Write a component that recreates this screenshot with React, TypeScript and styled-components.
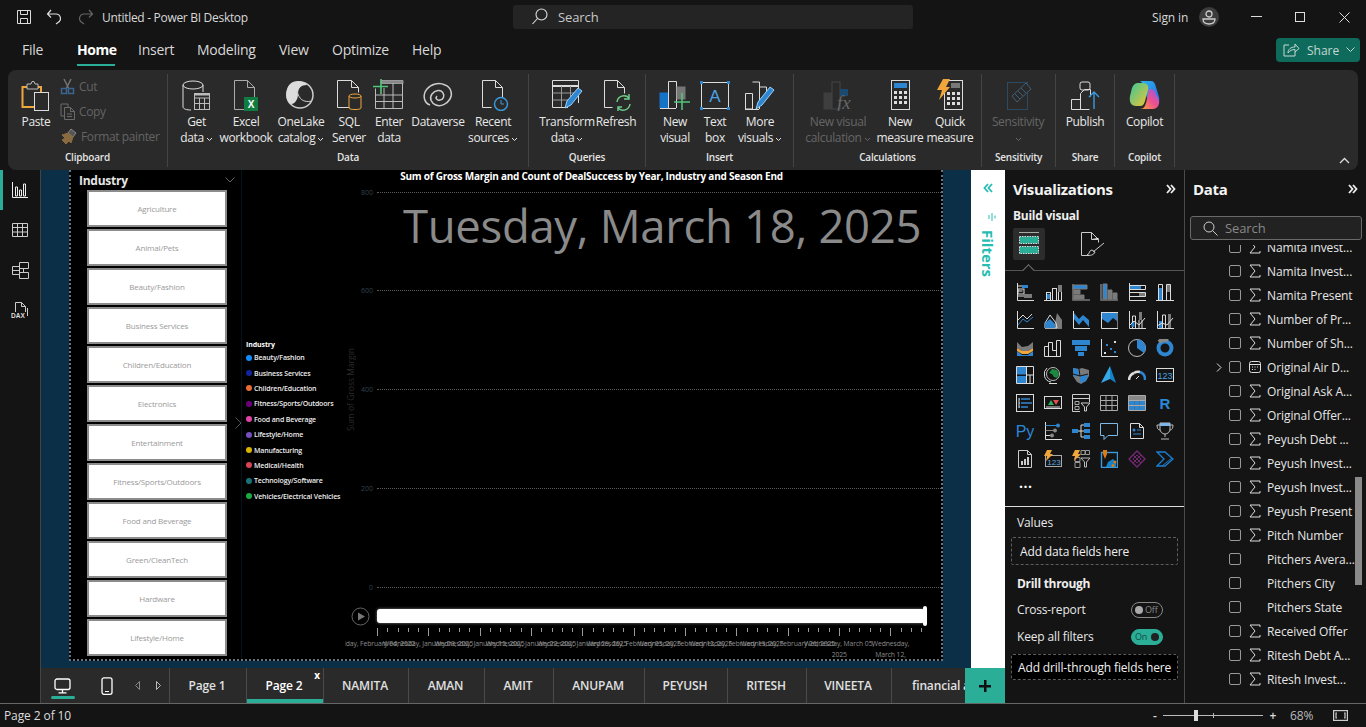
import React from "react";
import styled, { createGlobalStyle } from "styled-components";

const FONT = `"Open Sans", "Noto Sans", "Liberation Sans", sans-serif`;
const TEAL = "#2bae97";
const FILTER_TEAL = "#27bdb2";
const BLUE = "#2f86d0";
const GRAY = "#7a7a7a";
const LINE = "#dcdcdc";
const ORANGE = "#f0a63a";

const Global = createGlobalStyle`
  html, body { margin: 0; padding: 0; background: #141414; overflow: hidden; }
  #root { width: 1366px; height: 727px; }
  * { box-sizing: border-box; }
`;

const Shell = styled.div`
  width: 1366px; height: 727px; display: flex; flex-direction: column;
  background: #141414; color: #e8e8e8; font-family: ${FONT}; overflow: hidden;
`;

/* ---------- title bar ---------- */
const TitleBar = styled.div`
  height: 34px; display: flex; align-items: center; padding-left: 16px; position: relative;
`;
const QuickIcons = styled.div`display: flex; align-items: center; gap: 14px; width: 86px;`;
const AppTitle = styled.div`font-size: 12px; letter-spacing: -0.3px; color: #d8d8d8; width: 411px;`;
const SearchBar = styled.div`
  width: 400px; height: 24px; background: #242424; border-radius: 3px; display: flex; align-items: center;
  padding-left: 18px; gap: 9px; font-size: 13px; color: #c8c8c8; letter-spacing: -0.1px;
`;
const TitleRight = styled.div`display: flex; align-items: center; margin-left: auto;`;
const SignIn = styled.div`font-size: 12px; color: #d8d8d8; width: 47px; letter-spacing: -0.1px;`;
const Avatar = styled.div`
  width: 20px; height: 20px; border-radius: 50%; background: #3c3c3c; display: flex; align-items: center; justify-content: center;
  margin-right: 15px;
`;
const WinButton = styled.div`width: 44px; display: flex; justify-content: center;`;

/* ---------- menu ---------- */
const MenuBar = styled.div`height: 36px; display: flex; align-items: center; position: relative; padding-bottom: 4px;`;
const MenuList = styled.div`display: flex; flex: 1; padding-left: 22px; height: 32px;`;
const MenuItem = styled.div<{ $w: number; $active?: boolean }>`
  width: ${(p) => p.$w}px; font-size: 14px; line-height: 32px; letter-spacing: ${(p) => (p.$active ? "-0.45px" : "-0.25px")}; position: relative; white-space: nowrap;
  color: ${(p) => (p.$active ? "#fff" : "#d8d8d8")}; font-weight: ${(p) => (p.$active ? 700 : 400)};
  &::after { content: ""; display: ${(p) => (p.$active ? "block" : "none")}; position: absolute; left: 0; width: 38px; bottom: 0; height: 2px; background: ${TEAL}; }
`;
const ShareButton = styled.div`
  width: 84px; height: 24px; background: #0e6b5c; border-radius: 4px; margin-right: 6px; display: flex; align-items: center;
  padding-left: 7px; gap: 7px; font-size: 12px; color: #c4d8d3;
`;

/* ---------- ribbon ---------- */
const Ribbon = styled.div`
  height: 100px; margin: 0 8px; background: #2a2a2a; border-radius: 8px; display: flex; padding: 4px 0 3px; position: relative; flex: none;
`;
const Group = styled.div<{ $w: number; $pl?: number }>`
  width: ${(p) => p.$w}px; border-right: 1px solid #444; display: flex; flex-direction: column; flex: none;
  padding-left: ${(p) => p.$pl ?? 0}px;
`;
const GroupBody = styled.div`height: 75px; flex: none; display: flex;`;
const GroupLabel = styled.div<{ $ml?: number }>`
  height: 18px; margin-left: ${(p) => -(p.$ml ?? 0)}px; font-size: 10px; line-height: 16px; text-align: center; color: #e4e4e4; font-weight: 600; letter-spacing: -0.2px;
`;
const BigButton = styled.div<{ $w: number; $dim?: boolean }>`
  width: ${(p) => p.$w}px; flex: none; display: flex; flex-direction: column; align-items: center; padding-top: 5px;
  color: ${(p) => (p.$dim ? "#666" : "#e8e8e8")};
`;
const BigIcon = styled.div`height: 33px; width: 32px; display: flex; justify-content: center; flex: none; margin-bottom: 2px;`;
const BigText = styled.div`
  font-size: 12px; line-height: 16px; text-align: center; white-space: nowrap; letter-spacing: -0.35px;
`;
const SmallStack = styled.div`display: flex; flex-direction: column; margin-left: -4px;`;
const SmallButton = styled.div`
  height: 26px; display: flex; align-items: center; gap: 3px; font-size: 12px; color: #646464; white-space: nowrap; letter-spacing: -0.38px;
`;
const Collapse = styled.div`position: absolute; right: 8px; bottom: 6px; line-height: 0;`;

/* ---------- middle ---------- */
const Middle = styled.div`flex: 1; display: flex; min-height: 0; border-bottom: 1px solid #666;`;
const Rail = styled.div`
  width: 41px; flex: none; border-right: 1px solid #444; display: flex; flex-direction: column; position: relative;
`;
const RailItem = styled.div<{ $active?: boolean }>`
  height: 40px; display: flex; align-items: center; justify-content: center; border-left: 3px solid ${(p) => (p.$active ? TEAL : "transparent")};
  padding-right: 3px;
`;
const Center = styled.div`width: 964px; flex: none; display: flex; flex-direction: column;`;
const CanvasRow = styled.div`flex: 1; display: flex; min-height: 0;`;
const Canvas = styled.div`flex: 1; background: #0a2f47; padding: 0 28px 7px; min-width: 0;`;
const Page = styled.div`
  height: 100%; background: #000; display: flex; border: 2px dotted #66757f; border-top: none; position: relative;
`;

/* slicer */
const Slicer = styled.div`width: 171px; flex: none; padding-left: 8px; border-right: 1px solid #06121c; position: relative;`;
const SlicerHead = styled.div`
  height: 20px; display: flex; align-items: center; justify-content: space-between; padding: 0 6px 0 0; font-size: 12px; font-weight: 700; color: #e6e6e6; letter-spacing: -0.25px;
`;
const SlicerList = styled.div`margin-left: 8px; display: flex; flex-direction: column; gap: 2px; width: 140px;`;
const SlicerBtn = styled.div`
  height: 37px; background: #fff; border: 2px solid #8c8c8c; color: #9a9a9a; font-size: 8px; display: flex; align-items: center; justify-content: center; white-space: nowrap; letter-spacing: -0.17px;
`;
const SlicerArrow = styled.div`position: absolute; right: -1px; top: 247px; line-height: 0;`;

/* chart */
const ChartVisual = styled.div`flex: 1; display: flex; flex-direction: column; position: relative; min-width: 0;`;
const ChartTitle = styled.div`height: 12px; font-size: 10px; line-height: 12px; font-weight: 700; color: #fff; text-align: center; letter-spacing: -0.24px; white-space: nowrap;`;
const BigDate = styled.div`
  position: absolute; left: 161px; top: 25px; font-size: 45.5px; line-height: 60px; color: #8a8a8a; white-space: nowrap; letter-spacing: -0.33px;
`;
const ChartBody = styled.div`flex: 1; display: flex; min-height: 0;`;
const Legend = styled.div`width: 103px; flex: none; padding: 158px 0 0 4px;`;
const LegendTitle = styled.div`font-size: 7px; font-weight: 700; color: #fff; line-height: 10px; letter-spacing: -0.1px;`;
const LegendItem = styled.div`display: flex; align-items: center; gap: 2px; height: 15.4px; font-size: 7px; font-weight: 600; color: #eee; white-space: nowrap; letter-spacing: -0.15px;`;
const LegendDot = styled.span<{ $c: string }>`width: 6px; height: 6px; border-radius: 50%; background: ${(p) => p.$c}; flex: none;`;
const AxisTitle = styled.div`
  width: 13px; flex: none; writing-mode: vertical-rl; transform: rotate(180deg); text-align: center; font-size: 8.5px; color: #2c2c2c;
`;
const Plot = styled.div`flex: 1; display: flex; flex-direction: column; justify-content: space-between; padding: 4px 0 4px; min-width: 0;`;
const GridRow = styled.div`height: 12px; display: flex; align-items: center;`;
const GridLabel = styled.div`width: 15px; flex: none; text-align: right; font-size: 7px; color: #33414d; margin-right: 4px;`;
const GridDots = styled.div`flex: 1; border-top: 1px dotted #5c5c5c;`;

const PlayAxis = styled.div`height: 62px; flex: none; padding-top: 9px;`;
const PlayRow = styled.div`display: flex; align-items: center; height: 20px; padding-left: 109px;`;
const PlayBtn = styled.div`width: 26px; flex: none; line-height: 0;`;
const Track = styled.div`
  width: 548px; height: 14px; background: #fff; border-radius: 3px; position: relative; box-shadow: 0 0 3px #888; flex: none;
`;
const Thumb = styled.div`position: absolute; right: -2px; top: -3px; width: 4px; height: 20px; border-radius: 2px; background: #fff;`;
const TickRow = styled.div`display: flex; margin: 2px 0 0 135px; width: 560px; align-items: flex-start;`;
const Tick = styled.div<{ $major: boolean }>`width: 10.28px; flex: none; height: 8px;
  &::before { content: ""; display: block; width: 1px; height: ${(p) => (p.$major ? 8 : 4)}px; background: #999; }
`;
const LabelClip = styled.div`margin: 2px 0 0 103px; overflow: hidden; height: 20px; display: flex; padding-left: 6px;`;
const TimeLabel = styled.div`
  width: 51.4px; flex: none; display: flex; justify-content: center; font-size: 6.8px; line-height: 11px; color: #8c8c8c; letter-spacing: -0.1px; text-align: center;
  white-space: nowrap;
`;

/* filters */
const FiltersPane = styled.div`
  width: 34px; flex: none; background: #fff; display: flex; flex-direction: column; align-items: center; color: ${FILTER_TEAL}; padding-top: 13px;
`;
const FiltersLabel = styled.div`writing-mode: vertical-rl; font-size: 15px; font-weight: 700; margin-top: 8px; letter-spacing: 0;`;

/* page tabs */
const TabStrip = styled.div`height: 35px; flex: none; background: #2a2a2a; display: flex; overflow: hidden;`;
const TabTools = styled.div`width: 128px; flex: none; display: flex; align-items: center; padding-left: 10px;`;
const DeviceBtn = styled.div<{ $active?: boolean; $w: number; $ml?: number }>`
  width: ${(p) => p.$w}px; margin-left: ${(p) => p.$ml ?? 0}px; height: 35px; display: flex; align-items: center; justify-content: center; position: relative; flex: none;
  &::after { content: ""; display: ${(p) => (p.$active ? "block" : "none")}; position: absolute; left: 0; bottom: 4px; height: 3px; width: 24px; border-radius: 2px; background: ${TEAL}; }
`;
const Tab = styled.div<{ $w: number; $active?: boolean; $left?: boolean }>`
  width: ${(p) => p.$w}px; flex: none; border-left: 1px solid #4a4a4a; font-size: 12px; font-weight: 600; line-height: 35px; color: ${(p) => (p.$active ? "#fff" : "#e0e0e0")};
  text-align: ${(p) => (p.$left ? "left" : "center")}; padding: ${(p) => (p.$left ? "0 0 0 20px" : "0 2px 0 0")};
  position: relative; white-space: nowrap; overflow: hidden; letter-spacing: -0.15px;
  ${(p) => (p.$active ? `&::after { content: ""; position: absolute; left: 0; right: 0; bottom: 0; height: 4px; background: ${TEAL}; }` : "")}
`;
const TabClose = styled.span`position: absolute; right: 3px; top: -10px; font-size: 10px; font-weight: 700; color: #fff;`;
const AddTab = styled.div`width: 40px; flex: none; background: ${TEAL}; color: #111; display: flex; align-items: center; justify-content: center;`;

/* viz pane */
const VizPane = styled.div`width: 180px; flex: none; border-right: 1px solid #4a4a4a; display: flex; flex-direction: column;`;
const PaneHead = styled.div`
  height: 38px; flex: none; display: flex; align-items: center; justify-content: space-between; padding: 0 8px 1px 8px; font-size: 15px; font-weight: 700; color: #f4f4f4; letter-spacing: -0.3px;
`;
const BuildLabel = styled.div`font-size: 12px; font-weight: 700; color: #eee; padding-left: 8px; line-height: 16px; letter-spacing: -0.25px;`;
const BuildTabs = styled.div`height: 47px; display: flex; padding: 4px 0 0 8px; flex: none; border-bottom: 1px solid #555; position: relative;`;
const BuildTab = styled.div<{ $active?: boolean; $w: number }>`
  width: 32px; height: 32px; margin-right: ${(p) => p.$w}px; display: flex; align-items: center; justify-content: center; border-radius: 2px; background: ${(p) => (p.$active ? "#2c2c2c" : "transparent")};
`;
const Notch = styled.div`
  position: absolute; left: 19px; bottom: -5px; width: 9px; height: 9px; background: #141414; border-left: 1px solid #777; border-top: 1px solid #777; transform: rotate(45deg);
`;
const VizGrid = styled.div`
  display: grid; grid-template-columns: repeat(6, 18px); column-gap: 10px; row-gap: 9.8px; padding: 12px 0 0 11px; flex: none; height: 236px; border-bottom: 1px solid #ddd; align-content: start;
`;
const VizCell = styled.div`width: 18px; height: 18px; line-height: 0;`;
const MoreDots = styled.div`font-size: 14px; font-weight: 700; letter-spacing: 0.5px; line-height: 10px; margin-left: 3px; color: #fff;`;
const FieldLabel = styled.div`font-size: 12px; padding: 8px 0 0 12px; line-height: 16px; color: #e8e8e8; letter-spacing: -0.1px;`;
const DropZone = styled.div<{ $dark?: boolean; $h: number; $pl: number; $mt: number }>`
  margin: ${(p) => p.$mt}px 6px 0; height: ${(p) => p.$h}px; border: 1px dashed #5c5c5c; display: flex; align-items: center; padding-left: ${(p) => p.$pl}px; border-radius: 2px;
  font-size: 12px; color: #f0f0f0; white-space: nowrap; background: ${(p) => (p.$dark ? "#000" : "transparent")}; letter-spacing: -0.15px;
`;
const DrillTitle = styled.div`font-size: 12px; font-weight: 700; padding: 11px 0 4px 12px; line-height: 16px; color: #eee; letter-spacing: -0.3px;`;
const ToggleRow = styled.div`height: 27px; display: flex; align-items: center; justify-content: space-between; padding: 0 21px 0 12px; font-size: 12px; color: #e8e8e8; letter-spacing: -0.15px;`;
const ToggleBox = styled.div<{ $on?: boolean }>`
  width: 32px; height: 16px; border-radius: 8px; display: flex; align-items: center; padding: 0 3px; gap: 2px; font-size: 9px; flex: none;
  border: 1px solid ${(p) => (p.$on ? TEAL : "#888")}; background: ${(p) => (p.$on ? TEAL : "transparent")}; color: ${(p) => (p.$on ? "#0e4d42" : "#888")};
  justify-content: ${(p) => (p.$on ? "space-between" : "flex-start")};
`;
const ToggleKnob = styled.span<{ $on?: boolean }>`width: 8px; height: 8px; border-radius: 50%; background: ${(p) => (p.$on ? "#222" : "#aaa")}; flex: none;`;

/* data pane */
const DataPane = styled.div`flex: 1; display: flex; flex-direction: column; position: relative; min-width: 0;`;
const DataSearch = styled.div`
  height: 24px; margin: 8px 4px 0 5px; border: 1px solid #6a6a6a; border-radius: 3px; background: #222; display: flex; align-items: center; padding-left: 12px; gap: 7px; font-size: 13px; color: #888; flex: none; letter-spacing: -0.1px;
`;
const FieldList = styled.div`flex: 1; overflow: hidden; margin-top: 5px; min-height: 0;`;
const FieldInner = styled.div`margin-top: -10px;`;
const FieldRow = styled.div`height: 24px; display: flex; align-items: center; padding-left: 31px; font-size: 12px; color: #e6e6e6; white-space: nowrap; letter-spacing: -0.1px;`;
const Expander = styled.div`width: 13px; flex: none; line-height: 0;`;
const CheckBox = styled.div`width: 12px; height: 12px; border: 1px solid #999; border-radius: 2px; flex: none; margin-right: 8px;`;
const FieldIcon = styled.div`width: 18px; height: 14px; flex: none; line-height: 0; display: flex; justify-content: flex-start;`;
const ScrollThumb = styled.div`position: absolute; right: 4px; top: 307px; width: 7px; height: 108px; background: #8a8a8a;`;

/* status */
const StatusBar = styled.div`height: 23px; flex: none; display: flex; align-items: center; padding: 0 0 0 4px; font-size: 12px; color: #ddd; letter-spacing: -0.1px;`;
const ZoomTools = styled.div`margin-left: auto; display: flex; align-items: center; font-size: 12px; color: #ccc;`;
const ZoomSign = styled.span`width: 8px; text-align: center; color: #ddd; font-weight: 600;`;
const ZoomTrack = styled.div`width: 100px; height: 1px; background: #bbb; margin: 0 6px 0 4px; position: relative;`;
const ZoomThumb = styled.div`position: absolute; left: 31px; top: -5px; width: 4px; height: 11px; background: #ddd;`;
const ZoomMid = styled.div`position: absolute; left: 50px; top: -2px; width: 1px; height: 5px; background: #bbb;`;
const ZoomPct = styled.div`width: 30px; margin: 0 13px 0 13px; color: #bbb;`;
const FitIcon = styled.div`width: 33px; line-height: 0;`;

/* ---------- icons ---------- */
const S: React.FC<{ w?: number; h?: number; vb?: string; children: React.ReactNode }> = ({ w = 32, h = 32, vb, children }) => (
  <svg width={w} height={h} viewBox={vb ?? `0 0 ${w} ${h}`} fill="none" stroke={LINE} strokeWidth={1}>{children}</svg>
);

const DocPath = "M5.5 1.5h13l7 7v22h-20z M18.5 1.5v7h7";
const PlusGreen = "#52c77b";

const IPaste = () => (
  <S><path d="M7 8H2.5v20H15" stroke={ORANGE} strokeWidth={2} /><path d="M17 8h4v5" stroke={ORANGE} strokeWidth={2} />
    <path d="M7 10V5h4l1-2.5h2L15 5h3v5z" fill="#2a2a2a" stroke="#bbb" />
    <rect x="14.5" y="13.5" width="14" height="18" fill="#2a2a2a" /></S>
);
const ICut = () => (<S w={16} h={17}><path d="M4 1l5 10M11 1L6 11" stroke="#777" strokeWidth={1.4} /><rect x="1.5" y="10.5" width="5" height="5" stroke="#3a6590" strokeWidth={1.5} /><rect x="8.5" y="10.5" width="5" height="5" stroke="#3a6590" strokeWidth={1.5} /></S>);
const ICopy = () => (<S w={16} h={17}><path d="M4 13H1V1h7v3M4.500 4.500h6l4 4v8h-10z M10.500 4.500v4h4M7 11h5M7 13.500h5" stroke="#6a6a6a" /></S>);
const IBrush = () => (<S w={18} h={17}><path d="M11 1l5 4-3 4-5-4z" stroke="#888" fill="#555" /><path d="M8 5L2 7l3 3-3 2 4 4 3-3 2 2 2-6z" fill="#8a6a3f" stroke="#8a6a3f" /></S>);
const IGetData = () => (
  <S w={32} h={32}><ellipse cx="12" cy="6" rx="10" ry="4" /><path d="M2 6v22c0 2 4 3 8 3M22 6v7" />
    <rect x="13.500" y="14.500" width="15" height="16" fill="#2a2a2a" stroke="#bbb" /><path d="M13.500 19h15M13.500 24.500h15M18.500 19v11M23.500 19v11" stroke="#bbb" /><path d="M13.500 15.500h15" stroke="#bbb" strokeWidth={2} /></S>
);
const IExcel = () => (
  <S><path d={DocPath} stroke="#aaa" transform="translate(-1 0)" /><rect x="14" y="18" width="14" height="14" fill="#107c41" stroke="none" /><text x="21" y="29" fontFamily="Liberation Sans, sans-serif" fontSize="10" fontWeight="700" fill="#fff" stroke="none" textAnchor="middle">X</text></S>
);
const IOneLake = () => (
  <S><circle cx="15" cy="16" r="13" stroke="#ccc" strokeWidth={1.5} /><path d="M5 5c4-4 13-4 17 1-6 0-9 3-9 9 0 7-5 12-9 9-4-4-4-14 1-19z" fill="#ddd" stroke="none" /><path d="M12 12c2 8 6 12 15 10" stroke="#ccc" /></S>
);
const ISql = () => (
  <S><path d="M4.500 1.500h14l7 7v5M4.500 1.500v27h12M18.500 1.500v7h7" />
    <ellipse cx="22" cy="17" rx="6" ry="2" stroke={ORANGE} /><path d="M16 17v12c0 2 12 2 12 0V17" stroke={ORANGE} fill="none" /></S>
);
const IEnter = () => (
  <S w={32} h={32}><path d="M8 1.500h22v3H8z" fill="#888" stroke="#999" /><path d="M2.500 9.500v20h27V4" stroke="#bbb" /><path d="M2.500 16h27M2.500 22.500h27M11 9v20M20 4v25" stroke="#bbb" />
    <path d="M8 0v15M0 7.500h15" stroke={PlusGreen} strokeWidth={1.6} /></S>
);
const IDataverse = () => (
  <S w={32} h={32}><g stroke="#ccc" strokeWidth={1.5}><path d="M8 26C2 24 0 16 5 10 9 5 17 3 23 6c6 2 8 9 5 14-3 5-9 8-14 6-5-2-7-7-4-11 3-4 9-5 11-1 2 3 0 7-3 7-3 1-5-2-3-4" /></g></S>
);
const IRecent = () => (
  <S><path d="M5.500 1.500h13l7 7v10M5.500 1.500v27h9M18.500 1.500v7h7" /><circle cx="24" cy="25" r="6.500" stroke="#3b9ade" fill="#2a2a2a" strokeWidth={1.4} /><path d="M24 21v4h3" stroke="#3b9ade" /></S>
);
const ITransform = () => (
  <S><path d="M1.500 1.500h26V24M1.500 1.500v27H17" /><path d="M1.500 7h26" strokeWidth={2} /><path d="M1.500 14h22M1.500 21h17M10.500 7v21M19.500 7v13" stroke="#999" />
    <path d="M14 29l2-7L27 9l4 3L20 26z" fill="#2f86d0" stroke="#9ad0f5" /></S>
);
const IRefresh = () => (
  <S><path d="M4.500 1.500h13l7 7v6M4.500 1.500v27h8M17.500 1.500v7h7" /><path d="M17 23a7 7 0 0 1 12-4M30 25a7 7 0 0 1-12 4" stroke="#6fd08c" strokeWidth={1.4} /><path d="M29 15v5h-5M18 33v-5h4" stroke="#6fd08c" strokeWidth={1.4} /></S>
);
const INewVisual = () => (
  <S><rect x="1" y="14" width="8" height="15" fill="#1473c6" stroke="#1473c6" /><path d="M9.500 29V2.500h8V29" /><rect x="18" y="8" width="8" height="12" fill="#777" stroke="#777" /><path d="M1 29.500h16" />
    <path d="M23 14v17M15 23h16" stroke={PlusGreen} strokeWidth={1.5} /></S>
);
const ITextBox = () => (
  <S><rect x="2.500" y="3.500" width="27" height="26" /><g fill={BLUE} stroke="none"><rect x="1" y="2" width="3" height="3" /><rect x="28" y="2" width="3" height="3" /><rect x="1" y="28" width="3" height="3" /><rect x="28" y="28" width="3" height="3" /></g><text x="16" y="23" fontFamily="Liberation Sans, sans-serif" fontSize="17" fill="#4aa3e8" stroke="none" textAnchor="middle">A</text></S>
);
const IMoreVisuals = () => (
  <S><path d="M1.500 14.500h7V30H1.500zM8.500 3h7v27M15.500 8h7v8" /><path d="M1 30.500h14" /><path d="M12 30l2-7L26 8l4 3L18 26z" fill="#2f86d0" stroke="#9ad0f5" /></S>
);
const IVisCalc = () => (
  <S><rect x="2" y="14" width="8" height="16" fill="#3e3e3e" stroke="#3e3e3e" /><rect x="10" y="3" width="8" height="27" stroke="#444" fill="#2a2a2a" /><rect x="18" y="10" width="8" height="7" fill="#1a4a70" stroke="none" /><text x="15" y="30" fontFamily="Liberation Serif, serif" fontStyle="italic" fontSize="19" fill="#666" stroke="none">fx</text></S>
);
const ICalc = () => (
  <S><rect x="7.500" y="1.500" width="18" height="29" /><rect x="10" y="4" width="13" height="5" fill="#2f86d0" stroke="none" />
    <g fill="#ddd" stroke="none">{[12, 17, 22].flatMap((y) => [10, 15, 20].map((x) => <rect key={`${x}-${y}`} x={x} y={y} width="3" height="3" />))}</g></S>
);
const IQuick = () => (
  <S><rect x="10.500" y="1.500" width="18" height="29" /><rect x="17" y="4" width="9" height="5" fill="#777" stroke="none" />
    <g fill="#ddd" stroke="none">{[13, 18, 23].flatMap((y) => [13, 18, 23].map((x) => <rect key={`${x}-${y}`} x={x} y={y} width="3" height="3" />))}</g>
    <path d="M9 0h7l-4 8h4L5 21l3-10H3z" fill={ORANGE} stroke="none" /></S>
);
const ISensitivity = () => (
  <S><rect x="5.500" y="3.500" width="20" height="27" stroke="#2d4a60" /><path d="M10 17l14-13 5 6-14 13z" fill="#2a2a2a" stroke="#3f5f78" /><path d="M13 15l5 5M16 12l5 5M19 9l5 5" stroke="#3f5f78" /></S>
);
const IPublish = () => (
  <S><path d="M2.500 20.500h9v10h-9zM11.500 30.500V14.500l4-4h6v7" /><path d="M11.500 30.500h9" /><rect x="11" y="3" width="10" height="8" rx="2" /><path d="M25 30V13M20 18l5-5 5 5" stroke="#3b9ade" strokeWidth={1.4} /></S>
);
const ICopilot = () => (
  <svg width="32" height="32" viewBox="0 0 32 32">
    <defs>
      <linearGradient id="cpA" x1="0" y1="0" x2="1" y2="1"><stop offset="0" stopColor="#2fb4f0" /><stop offset="1" stopColor="#1f6de0" /></linearGradient>
      <linearGradient id="cpB" x1="0" y1="1" x2="1" y2="0"><stop offset="0" stopColor="#f5a63c" /><stop offset=".5" stopColor="#ef4f8e" /><stop offset="1" stopColor="#8a5cf0" /></linearGradient>
      <linearGradient id="cpC" x1="0" y1="0" x2="1" y2="1"><stop offset="0" stopColor="#37c89a" /><stop offset="1" stopColor="#f3c332" /></linearGradient>
    </defs>
    <path d="M11 2h11c2 0 3 1 4 3l4 13c1 4-1 8-5 8h-5L15 8c-1-3-2-5-4-6z" fill="url(#cpA)" />
    <path d="M9 4C6 4 4 6 3 9L1 17c-1 6 1 10 6 10h4c3 0 4-2 5-5l3-11c1-4-1-7-5-7z" fill="url(#cpC)" />
    <path d="M21 10c3 0 5 1 6 5l3 6c1 5-2 9-6 9H11c4 0 5-3 6-6l2-8c.5-3 1-6 2-6z" fill="url(#cpB)" />
  </svg>
);

const Ax = <path d="M1.500 0v17.500H18" />;

const vizIcons: React.ReactNode[] = [
  <S w={18} h={18}>{Ax}<path d="M1.500 3h5M1.500 8h5M1.500 13h9" stroke={LINE} /><rect x="6" y="2" width="6" height="3" fill={BLUE} stroke="none" /><rect x="2" y="6" width="6" height="5" stroke={LINE} /><rect x="8" y="11" width="8" height="4" fill={GRAY} stroke="none" /></S>,
  <S w={18} h={18}><path d="M0 17.500h18" /><rect x="2.500" y="9.500" width="4" height="8" /><rect x="3" y="11" width="3" height="5" fill={BLUE} stroke="none" /><rect x="8.500" y="5.500" width="4" height="12" /><rect x="14" y="2" width="4" height="7" fill={GRAY} stroke="none" /><path d="M14.500 9v8.500M17.500 9v8.500" /></S>,
  <S w={18} h={18}><g stroke={GRAY} strokeWidth={1.5}><path d="M1 1v16h17" /></g><path d="M1 2h14v4H1z" fill={BLUE} stroke={GRAY} /><path d="M2 7h6v4H2zM2 12h10v4H2z" fill={GRAY} stroke={GRAY} /></S>,
  <S w={18} h={18}><g stroke={GRAY} strokeWidth={1.5}><path d="M1 1v16h17" /></g><path d="M3 1h4v15H3z" fill={BLUE} stroke={GRAY} /><path d="M8 7h4v9H8zM13 10h4v6h-4z" fill={GRAY} stroke={GRAY} /></S>,
  <S w={18} h={18}>{Ax}<path d="M1.500 2.500h16v4h-16zM1.500 9.500h16v4h-16z" /><rect x="2" y="3" width="11" height="3" fill={BLUE} stroke="none" /><rect x="11" y="10" width="6" height="3" fill={GRAY} stroke="none" /></S>,
  <S w={18} h={18}><path d="M0 17.500h18" /><path d="M2.500 1.500h4v16h-4zM10.500 1.500h4v16h-4z" /><rect x="3" y="5" width="3" height="12" fill={BLUE} stroke="none" /><rect x="11" y="2" width="3" height="7" fill={GRAY} stroke="none" /></S>,

  <S w={18} h={18}>{Ax}<path d="M2 9l5-5 4 4 5-5" /><path d="M2 14l5-6 4 3 6-5" stroke={BLUE} /></S>,
  <S w={18} h={18}><path d="M1 17h17" /><path d="M10 17l3-15 5 7v8z" fill={GRAY} stroke="none" /><path d="M1 12l5-8 6 8 1 5H1z" fill="none" stroke={LINE} /><path d="M1 17v-5l5-4 5 5v4z" fill={BLUE} stroke="none" /></S>,
  <S w={18} h={18}>{Ax}<path d="M2 2l5 6 4-4 6 5v7L11 9l-4 5-5-6z" fill={BLUE} stroke="none" /></S>,
  <S w={18} h={18}><path d="M1.500 1v16.500H18M1.500 1.500H18v16" /><path d="M2 2h15v8l-4-3-5 5-6-4z" fill={BLUE} stroke="none" /></S>,
  <S w={18} h={18}>{Ax}<path d="M4.500 17V5M7.500 17V5M4.500 5h3" /><rect x="11" y="1" width="3" height="8" fill={GRAY} stroke="none" /><path d="M11 9v8M14 9v8" /><rect x="3.500" y="11" width="3" height="5" fill={BLUE} stroke="none" /><path d="M1 15l5-5 5 4 6-7" /></S>,
  <S w={18} h={18}>{Ax}<path d="M6.500 17V4h3v13" /><rect x="3" y="10" width="3" height="7" fill={BLUE} stroke="none" /><rect x="12" y="3" width="3" height="14" fill={GRAY} stroke="none" /><path d="M1 15l5-3 5 2 6-7" /></S>,

  <S w={18} h={18}><path d="M1 3l5 5 6-1 5-4v6l-5 3-6 0-5-3z" fill={GRAY} stroke="none" /><path d="M1 9l5 3 6 0 5-3v3l-5 3-6 0-5-3z" fill={ORANGE} stroke="none" /><path d="M1 12l5 4h6l5-4v5H1z" fill={BLUE} stroke="none" /></S>,
  <S w={18} h={18}><path d="M.500 17.500V7.500h4v10M.500 17.500h16M4.500 17.500V3.500h4v8M8.500 11.500h4v6M12.500 17.500V1.500h4v16" /></S>,
  <S w={18} h={18}><rect x="0" y="1" width="18" height="5" fill={BLUE} stroke="none" /><rect x="3" y="7" width="12" height="5" fill={BLUE} stroke="none" /><rect x="6" y="13" width="6" height="4" fill={BLUE} stroke="none" /></S>,
  <S w={18} h={18}>{Ax}<g stroke="none"><rect x="4" y="13" width="2" height="2" fill="#ddd" /><rect x="6" y="5" width="2" height="2" fill={BLUE} /><rect x="10" y="9" width="2" height="2" fill={BLUE} /><rect x="14" y="12" width="2" height="2" fill={BLUE} /><rect x="14" y="2" width="2" height="2" fill="#ddd" /></g></S>,
  <S w={18} h={18}><circle cx="9" cy="9" r="8.500" stroke="#bbb" /><path d="M9 9l7 5A8.500 8.500 0 0 0 9 .5z" fill={BLUE} stroke="none" /></S>,
  <S w={18} h={18}><circle cx="9" cy="9" r="6.500" stroke={BLUE} strokeWidth={4} /><path d="M3 3A8 8 0 0 1 12 1.500" stroke="#888" strokeWidth={4} /></S>,

  <S w={18} h={18}><path d="M.500.500h17v17H.500zM10.500.500v17M10.500 9h7M14 9v8.500" /><rect x="1" y="1" width="9" height="7.500" fill={BLUE} stroke="none" /><rect x="1" y="10" width="9" height="7" fill={BLUE} stroke="none" /></S>,
  <S w={18} h={18}><circle cx="9" cy="8" r="6.500" stroke="#bbb" /><path d="M8 3l5 1 2 4-2 4-3-1-2-3-3-1z" fill="#1c8a3e" stroke="none" /><path d="M3 2a8 8 0 0 0 4 14M5 17.500h8" /></S>,
  <S w={18} h={18}><path d="M1 2l6 1 3-1 7 2v6l-3 5-5 3-4-2-4-6z" fill={GRAY} stroke="none" /><path d="M1 2l5 1 1 6-5 2zM8 10l8-1-2 6-6 2z" fill={BLUE} stroke="none" /><path d="M7 3l1 7 8-2M1 8l7 2" stroke="#141414" /></S>,
  <S w={18} h={18}><path d="M10 0l6 17-6-4z" fill="#1583c9" stroke="none" /><path d="M10 0L1 17l9-4z" fill="#35a8e8" stroke="none" /></S>,
  <S w={18} h={18}><path d="M1 14a8 8 0 0 1 5-7" stroke="#ddd" strokeWidth={2.500} /><path d="M6 7a8 8 0 0 1 6-1" stroke="#ddd" strokeWidth={2.500} /><path d="M12 6a8 8 0 0 1 5 8" stroke={BLUE} strokeWidth={2.500} /><path d="M8 13l3-3" stroke="#ddd" /></S>,
  <S w={18} h={18}><rect x=".5" y="2.500" width="17" height="13" /><text x="9" y="12.500" fontFamily="Liberation Sans, sans-serif" fontSize="9" fill="#4aa3e8" stroke="none" textAnchor="middle">123</text></S>,

  <S w={18} h={18}><rect x=".5" y=".5" width="17" height="17" /><path d="M3 5h1M5 5h9M3 9h1M5 9h11M3 13h1M5 13h7" stroke={BLUE} strokeWidth={1.4} /><path d="M3 4v10" /></S>,
  <S w={18} h={18}><rect x=".5" y="2.500" width="17" height="12" /><path d="M4 11l3-5 3 5z" fill="#2fae5f" stroke="none" /><path d="M9 6h6l-3 5z" fill="#e05050" stroke="none" /><path d="M2 13h14" /></S>,
  <S w={18} h={18}><path d="M17.500 8V.5H.500v17H8M.500 4.500h17" stroke="#ccc" /><path d="M3 7.500h4v3H3zM3 12.500h4v3H3z" stroke="#aaa" /><path d="M9 9h9l-3.500 4v4h-2v-4z" stroke="#ccc" fill="#141414" /></S>,
  <S w={18} h={18}><path d="M.500 1.500h17v15H.500zM.500 6.500h17M.500 11.500h17M6 1.500v15M12 1.500v15" stroke="#aaa" /></S>,
  <S w={18} h={18}><path d="M.500 1.500h17v15H.500zM.500 6.500h17M.500 11.500h17M6 1.500v15M12 1.500v15" stroke="#aaa" /><rect x="1" y="2" width="16" height="4" fill="#888" stroke="none" /><g fill={BLUE} stroke="none"><rect x="1" y="7" width="5" height="4" /><rect x="6.500" y="7" width="5" height="4" /><rect x="1" y="12" width="5" height="4" /><rect x="6.500" y="12" width="5" height="4" /><rect x="12" y="7" width="5" height="4" /><rect x="12" y="12" width="5" height="4" /></g></S>,
  <S w={18} h={18}><text x="9" y="15" fontFamily="Liberation Sans, sans-serif" fontSize="15" fontWeight="700" fill="#2b88d8" stroke="none" textAnchor="middle">R</text></S>,

  <S w={18} h={18}><text x="9" y="14.500" fontFamily="Liberation Sans, sans-serif" fontSize="16" fill="#2b88d8" stroke="none" textAnchor="middle">Py</text></S>,
  <S w={18} h={18}>{Ax}<path d="M1.500 3.500h11" stroke={BLUE} /><circle cx="14" cy="3.500" r="2" fill={BLUE} stroke="none" /><path d="M1.500 8.500h8" stroke="#888" /><circle cx="11" cy="8.500" r="2" fill="#888" stroke="none" /><path d="M1.500 13.500h5" /><circle cx="8" cy="13.500" r="2" fill="#888" stroke="none" /></S>,
  <S w={18} h={18}><rect x="0" y="7" width="6" height="4" fill={BLUE} stroke="none" /><g fill={BLUE} stroke="none"><rect x="12" y="1" width="6" height="4" /><rect x="12" y="7" width="6" height="4" /><rect x="12" y="13" width="6" height="4" /></g><path d="M6 9h6M9 3h3M9 15h3M9 3v12" /></S>,
  <S w={18} h={18}><path d="M.500 1.500h17v12H8l-4 4v-4H.500z" stroke="#7db8e8" /></S>,
  <S w={18} h={18}><path d="M2.500 1.500h9l4 4v11h-13z M11.500 1.500v4h4" /><circle cx="6" cy="8" r="1.500" fill={BLUE} stroke="none" /><path d="M5 12h8M9 8h4" stroke={BLUE} /></S>,
  <S w={18} h={18}><path d="M4 1h10v6a5 5 0 0 1-10 0z M9 12v3M5 17h8M4 3H1c0 3 1 5 3 5M14 3h3c0 3-1 5-3 5" stroke="#bbb" /><path d="M4 1h10v3H4z" fill="#7db8e8" stroke="none" /></S>,

  <S w={18} h={18}><path d="M2.500 .5h9l4 4v13h-13z M11.500 .5v4h4" stroke="#ccc" /><g fill="#ccc" stroke="none"><rect x="5" y="11" width="2" height="4" /><rect x="8" y="9" width="2" height="6" /><rect x="11" y="7" width="2" height="8" /></g></S>,
  <S w={18} h={18}><rect x="1.500" y="5.500" width="16" height="11" stroke="#aaa" /><text x="10" y="14.500" fontFamily="Liberation Sans, sans-serif" fontSize="8" fill="#5aa8e0" stroke="none" textAnchor="middle">123</text><path d="M3 0h5L6 4h3L2 11l1-5H0z" fill={ORANGE} stroke="none" /></S>,
  <S w={18} h={18}><path d="M9 .5h4v4H9zM13.500.5h4v4h-4zM3 7.500h5v4H3zM3 12.500h5v5H3z" stroke="#999" /><path d="M9 8h9l-3.500 4v5h-2v-5z" stroke="#bbb" fill="#141414" /><path d="M3 0h5L6 4h3L2 11l1-5H0z" fill={ORANGE} stroke="none" /></S>,
  <S w={18} h={18}><rect x="1.500" y="2.500" width="16" height="15" stroke="#3b9ade" strokeWidth={1.4} /><path d="M6 17l2-5 5-3 3 3v5z" fill="#1583c9" stroke="none" /><path d="M3 0h4v4L5 9 3 4z" fill="#e07b12" stroke="none" /><circle cx="15" cy="12" r="1.500" fill="#e07b12" stroke="none" /><circle cx="13" cy="15.500" r="1.500" fill="#e07b12" stroke="none" /></S>,
  <S w={18} h={18}><path d="M9 1l8 8-8 8-8-8z" stroke="#742774" strokeWidth={1.4} /><path d="M5 5l8 8M13 5l-8 8M5 9l4-4 4 4-4 4z" stroke="#742774" /></S>,
  <S w={18} h={18}><path d="M1 2h8l8 7-8 7H1l7-7z" stroke="#1b7ed0" strokeWidth={1.3} /><path d="M6 16l10-8" stroke="#1b7ed0" /></S>,
];

const Sigma = () => (
  <svg width="12" height="14" viewBox="0 0 12 14" fill="none" stroke="#ddd"><path d="M11 3V1H1l5 6-5 6h10v-2" /></svg>
);
const CalIcon = () => (
  <svg width="12" height="13" viewBox="0 0 12 13" fill="none" stroke="#ddd"><rect x=".5" y="1.500" width="11" height="11" rx="2" /><path d="M.5 4.500h11" /><g fill="#ddd" stroke="none"><rect x="3" y="6.500" width="1" height="1" /><rect x="5.500" y="6.500" width="1" height="1" /><rect x="8" y="6.500" width="1" height="1" /><rect x="3" y="9" width="1" height="1" /><rect x="5.500" y="9" width="1" height="1" /></g></svg>
);
const Chev2: React.FC<{ c?: string }> = ({ c = "#eee" }) => (
  <svg width="10" height="10" viewBox="0 0 10 10" fill="none" stroke={c} strokeWidth={1.8}><path d="M1 1l3.500 4L1 9M5 1l3.500 4L5 9" /></svg>
);
const ChevL2 = () => (
  <svg width="10" height="10" viewBox="0 0 10 10" fill="none" stroke={FILTER_TEAL} strokeWidth={1.8}><path d="M5 1L1.500 5 5 9M9 1L5.500 5 9 9" /></svg>
);

type BB = { t: React.ReactNode; icon: React.ReactNode; w: number; dim?: boolean };
const Btn: React.FC<BB> = ({ t, icon, w, dim }) => (
  <BigButton $w={w} $dim={dim}><BigIcon>{icon}</BigIcon><BigText>{t}</BigText></BigButton>
);
const C = () => (
  <svg width="7" height="5" viewBox="0 0 7 5" fill="none" stroke="currentColor" style={{ marginLeft: 2 }}><path d="M1 1l2.500 2.500L6 1" /></svg>
);

const industries = ["Agriculture","Animal/Pets","Beauty/Fashion","Business Services","Children/Education","Electronics","Entertainment","Fitness/Sports/Outdoors","Food and Beverage","Green/CleanTech","Hardware","Lifestyle/Home"];
const legend: [string, string][] = [
  ["Beauty/Fashion", "#118dff"], ["Business Services", "#12239e"], ["Children/Education", "#e66c37"], ["Fitness/Sports/Outdoors", "#6b007b"],
  ["Food and Beverage", "#e044a7"], ["Lifestyle/Home", "#744ec2"], ["Manufacturing", "#d9b300"], ["Medical/Health", "#d64550"],
  ["Technology/Software", "#197278"], ["Vehicles/Electrical Vehicles", "#1aab40"],
];
const timeLabels: React.ReactNode[] = [
  "Friday, February 04, 2022", "Wednesday, January 08, 2025", "Wednesday, January 15, 2025", "Wednesday, January 22, 2025", "Wednesday, January 29, 2025",
  "Wednesday, February 05, 2025", "Wednesday, February 12, 2025", "Wednesday, February 19, 2025", "Wednesday, February 26, 2025",
  <span key="a">Wednesday, March 05,<br />2025</span>, <span key="b">Wednesday,<br />March 12,</span>,
];
const tabs: [string, number, boolean?][] = [["Page 1", 77], ["Page 2", 77, true], ["NAMITA", 85], ["AMAN", 76], ["AMIT", 69], ["ANUPAM", 91], ["PEYUSH", 83], ["RITESH", 79], ["VINEETA", 85]];
const fields: [string, "s" | "c" | "n"][] = [
  ["Namita Invest...", "s"], ["Namita Invest...", "s"], ["Namita Present", "s"], ["Number of Pr...", "s"], ["Number of Sh...", "s"], ["Original Air D...", "c"],
  ["Original Ask A...", "s"], ["Original Offer...", "s"], ["Peyush Debt ...", "s"], ["Peyush Invest...", "s"], ["Peyush Invest...", "s"], ["Peyush Present", "s"],
  ["Pitch Number", "s"], ["Pitchers Avera...", "n"], ["Pitchers City", "n"], ["Pitchers State", "n"], ["Received Offer", "s"], ["Ritesh Debt A...", "s"], ["Ritesh Invest...", "s"],
];

export default function App() {
  return (
    <Shell>
      <Global />
      <TitleBar>
        <QuickIcons>
          <svg width="16" height="16" viewBox="0 0 16 16" fill="none" stroke="#ddd"><path d="M1.500 1.500h13v13h-13zM4.500 1.500v4h7v-4M4.500 14.500v-5h7v5" /></svg>
          <svg width="17" height="16" viewBox="0 0 17 16" fill="none" stroke="#ddd" strokeWidth={1.2}><path d="M5 1L1.500 5 5 8.500M1.500 5H10a4.500 4.500 0 0 1 2 8.500l-2 1.500" /></svg>
          <svg width="17" height="16" viewBox="0 0 17 16" fill="none" stroke="#666" strokeWidth={1.2}><path d="M12 1l3.500 4L12 8.500M15.500 5H7a4.500 4.500 0 0 0-2 8.500l2 1.500" /></svg>
        </QuickIcons>
        <AppTitle>Untitled - Power BI Desktop</AppTitle>
        <SearchBar>
          <svg width="18" height="18" viewBox="0 0 18 18" fill="none" stroke="#ddd" strokeWidth={1.1}><circle cx="10.500" cy="6.500" r="5.500" /><path d="M6.500 10.500L1.500 16" /></svg>
          Search
        </SearchBar>
        <TitleRight>
          <SignIn>Sign in</SignIn>
          <Avatar><svg width="14" height="15" viewBox="0 0 14 15" fill="none" stroke="#ccc" strokeWidth={1.3}><circle cx="7" cy="4" r="3" /><path d="M1 9h12c0 4-3 5-6 5s-6-1-6-5z" /></svg></Avatar>
          <WinButton><svg width="11" height="2"><path d="M0 .5h11" stroke="#ddd" /></svg></WinButton>
          <WinButton><svg width="11" height="11"><rect x=".5" y=".5" width="9" height="9" fill="none" stroke="#ddd" /></svg></WinButton>
          <WinButton><svg width="11" height="11"><path d="M.5.5l10 10M10.500.5l-10 10" stroke="#ddd" /></svg></WinButton>
        </TitleRight>
      </TitleBar>

      <MenuBar>
        <MenuList>
          <MenuItem $w={55}>File</MenuItem>
          <MenuItem $w={61} $active>Home</MenuItem>
          <MenuItem $w={59}>Insert</MenuItem>
          <MenuItem $w={82}>Modeling</MenuItem>
          <MenuItem $w={53}>View</MenuItem>
          <MenuItem $w={80}>Optimize</MenuItem>
          <MenuItem $w={40}>Help</MenuItem>
        </MenuList>
        <ShareButton>
          <svg width="17" height="14" viewBox="0 0 17 14" fill="none" stroke="#c4d8d3"><path d="M6 2H1v11h11V9" /><path d="M5 10c0-4 3-6 7-6V1l4 4.500L12 9V6.500C9 6.500 7 7.500 5 10z" /></svg>
          Share
          <svg width="9" height="6" viewBox="0 0 9 6" fill="none" stroke="#c4d8d3"><path d="M.5.5l4 4 4-4" /></svg>
        </ShareButton>
      </MenuBar>

      <Ribbon>
        <Group $w={160}>
          <GroupBody>
            <Btn w={56} t="Paste" icon={<IPaste />} />
            <SmallStack>
              <SmallButton><ICut /><span>Cut</span></SmallButton>
              <SmallButton><ICopy /><span>Copy</span></SmallButton>
              <SmallButton><IBrush /><span>Format painter</span></SmallButton>
            </SmallStack>
          </GroupBody>
          <GroupLabel>Clipboard</GroupLabel>
        </Group>
        <Group $w={361} $pl={7}>
          <GroupBody>
            <Btn w={43} t={<>Get<br />data<C /></>} icon={<IGetData />} />
            <Btn w={56} t={<>Excel<br />workbook</>} icon={<IExcel />} />
            <Btn w={54} t={<>OneLake<br />catalog<C /></>} icon={<IOneLake />} />
            <Btn w={42} t={<>SQL<br />Server</>} icon={<ISql />} />
            <Btn w={38} t={<>Enter<br />data</>} icon={<IEnter />} />
            <Btn w={60} t="Dataverse" icon={<IDataverse />} />
            <Btn w={50} t={<>Recent<br />sources<C /></>} icon={<IRecent />} />
          </GroupBody>
          <GroupLabel $ml={7}>Data</GroupLabel>
        </Group>
        <Group $w={117} $pl={10}>
          <GroupBody>
            <Btn w={56} t={<>Transform<br />data<C /></>} icon={<ITransform />} />
            <Btn w={42} t="Refresh" icon={<IRefresh />} />
          </GroupBody>
          <GroupLabel $ml={10}>Queries</GroupLabel>
        </Group>
        <Group $w={148} $pl={10}>
          <GroupBody>
            <Btn w={38} t={<>New<br />visual</>} icon={<INewVisual />} />
            <Btn w={42} t={<>Text<br />box</>} icon={<ITextBox />} />
            <Btn w={48} t={<>More<br />visuals<C /></>} icon={<IMoreVisuals />} />
          </GroupBody>
          <GroupLabel $ml={10}>Insert</GroupLabel>
        </Group>
        <Group $w={188} $pl={10}>
          <GroupBody>
            <Btn w={68} dim t={<>New visual<br />calculation<C /></>} icon={<IVisCalc />} />
            <Btn w={56} t={<>New<br />measure</>} icon={<ICalc />} />
            <Btn w={44} t={<>Quick<br />measure</>} icon={<IQuick />} />
          </GroupBody>
          <GroupLabel $ml={10}>Calculations</GroupLabel>
        </Group>
        <Group $w={74}>
          <GroupBody>
            <Btn w={72} dim t={<>Sensitivity<br /><C /></>} icon={<ISensitivity />} />
          </GroupBody>
          <GroupLabel>Sensitivity</GroupLabel>
        </Group>
        <Group $w={59}>
          <GroupBody><Btn w={58} t="Publish" icon={<IPublish />} /></GroupBody>
          <GroupLabel>Share</GroupLabel>
        </Group>
        <Group $w={60}>
          <GroupBody><Btn w={59} t="Copilot" icon={<ICopilot />} /></GroupBody>
          <GroupLabel>Copilot</GroupLabel>
        </Group>
        <Collapse><svg width="11" height="7" viewBox="0 0 11 7" fill="none" stroke="#ddd" strokeWidth={1.3}><path d="M1 6l4.500-4.500L10 6" /></svg></Collapse>
      </Ribbon>

      <Middle>
        <Rail>
          <RailItem $active><svg width="16" height="16" viewBox="0 0 16 16" fill="none" stroke="#eee"><path d="M.5 0v15.500H16M3.500 14V5h2v9zM7.500 14V8h2v6zM11.500 14V2h2v12z" /></svg></RailItem>
          <RailItem><svg width="18" height="16" viewBox="0 0 18 16" fill="none" stroke="#ccc"><path d="M1.500 1.500h15v13h-15zM1.500 5.500h15M1.500 10h15M6.500 1.500v13M11.500 1.500v13" /></svg></RailItem>
          <RailItem><svg width="18" height="18" viewBox="0 0 18 18" fill="none" stroke="#ccc"><path d="M8.500 1.500h9v6h-9zM1.500 5.500h7v8h-7zM1.500 9.500h7M8.500 11.500h9v6h-9zM12.500 7.500v4" /></svg></RailItem>
          <RailItem><svg width="18" height="16" viewBox="0 0 18 16" fill="none" stroke="#ccc"><path d="M4.500 10V.5h6l4 4V10M10.500.5v4h4M16.500 6v8" /><text x="0" y="15.500" fontFamily="Liberation Sans, sans-serif" fontSize="6.500" fontWeight="700" fill="#ddd" stroke="none">DAX</text></svg></RailItem>
        </Rail>

        <Center>
          <CanvasRow>
            <Canvas>
              <Page>
                <Slicer>
                  <SlicerHead>Industry<svg width="10" height="6" viewBox="0 0 10 6" fill="none" stroke="#666"><path d="M.5.5L5 5 9.500.5" /></svg></SlicerHead>
                  <SlicerList>{industries.map((n) => <SlicerBtn key={n}>{n}</SlicerBtn>)}</SlicerList>
                  <SlicerArrow><svg width="7" height="12" viewBox="0 0 7 12" fill="none" stroke="#555"><path d="M.5.5L6 6 .5 11.500" /></svg></SlicerArrow>
                </Slicer>
                <ChartVisual>
                  <ChartTitle>Sum of Gross Margin and Count of DealSuccess by Year, Industry and Season End</ChartTitle>
                  <BigDate>Tuesday, March 18, 2025</BigDate>
                  <ChartBody>
                    <Legend>
                      <LegendTitle>Industry</LegendTitle>
                      {legend.map(([n, c]) => <LegendItem key={n}><LegendDot $c={c} />{n}</LegendItem>)}
                    </Legend>
                    <AxisTitle>Sum of Gross Margin</AxisTitle>
                    <Plot>
                      {["800", "600", "400", "200", "0"].map((v) => (
                        <GridRow key={v}><GridLabel>{v}</GridLabel><GridDots /></GridRow>
                      ))}
                    </Plot>
                  </ChartBody>
                  <PlayAxis>
                    <PlayRow>
                      <PlayBtn><svg width="19" height="19" viewBox="0 0 19 19" fill="none" stroke="#666"><circle cx="9.500" cy="9.500" r="8.500" /><path d="M7 5.500l7 4-7 4z" fill="#777" stroke="none" /></svg></PlayBtn>
                      <Track><Thumb /></Track>
                    </PlayRow>
                    <TickRow>{Array.from({ length: 54 }, (_, i) => <Tick key={i} $major={i % 5 === 0} />)}</TickRow>
                    <LabelClip>{timeLabels.map((t, i) => <TimeLabel key={i}>{t}</TimeLabel>)}</LabelClip>
                  </PlayAxis>
                </ChartVisual>
              </Page>
            </Canvas>
            <FiltersPane>
              <ChevL2 />
              <svg width="10" height="10" viewBox="0 0 10 10" fill="none" stroke={FILTER_TEAL} style={{ marginTop: 19, marginLeft: 8 }}><path d="M2 3v4M5 1v8M8 3.500v3" /></svg>
              <FiltersLabel>Filters</FiltersLabel>
            </FiltersPane>
          </CanvasRow>
          <TabStrip>
            <TabTools>
              <DeviceBtn $w={24} $active><svg width="18" height="16" viewBox="0 0 18 16" fill="none" stroke="#fff" strokeWidth={1.3}><rect x="1" y="1" width="15" height="10.500" rx="2" /><path d="M8.500 12v2.500M4.500 14.800h8" /></svg></DeviceBtn>
              <DeviceBtn $w={20} $ml={22}><svg width="12" height="18" viewBox="0 0 12 18"><rect x="1" y=".8" width="10" height="16.500" rx="2" fill="none" stroke="#fff" strokeWidth={1.3} /><path d="M4 14.500h4" stroke="#fff" /></svg></DeviceBtn>
              <DeviceBtn $w={22} $ml={9}><svg width="5" height="9" viewBox="0 0 5 9" fill="none" stroke="#888"><path d="M4.500.5v8L.5 4.500z" /></svg></DeviceBtn>
              <DeviceBtn $w={20}><svg width="5" height="9" viewBox="0 0 5 9" fill="none" stroke="#bbb"><path d="M.5.5v8l4-4z" /></svg></DeviceBtn>
            </TabTools>
            {tabs.map(([n, w, a]) => (
              <Tab key={n} $w={w} $active={a}>{n}{a ? <TabClose>x</TabClose> : null}</Tab>
            ))}
            <Tab $w={74} $left>financial a</Tab>
            <AddTab><svg width="12" height="12" viewBox="0 0 12 12" fill="#111"><path d="M5 0h2.500v5H12v2.500H7.500V12H5V7.500H0V5h5z" /></svg></AddTab>
          </TabStrip>
        </Center>

        <VizPane>
          <PaneHead>Visualizations<Chev2 /></PaneHead>
          <BuildLabel>Build visual</BuildLabel>
          <BuildTabs>
            <BuildTab $active $w={32}>
              <svg width="28" height="26" viewBox="0 0 28 26" fill="none"><path d="M4 1.500h20" stroke="#aaa" /><rect x="4.500" y="5.500" width="19" height="7" fill={TEAL} stroke="#ddd" strokeDasharray="1.500 1" /><rect x="4.500" y="15.500" width="19" height="7" fill={TEAL} stroke="#ddd" strokeDasharray="1.500 1" /></svg>
            </BuildTab>
            <BuildTab $w={0}>
              <svg width="26" height="26" viewBox="0 0 26 26" fill="none" stroke="#ccc"><path d="M1.500 1.500h10l7 7v3M1.500 1.500v23h8M11.500 1.500v7h7" /><path d="M12 8h7l-1-1z" fill="#fff" stroke="none" /><path d="M24 12L13 21M7 24c3 1 7 0 8-3l-3-2c-3 0-2 4-5 5z" /></svg>
            </BuildTab>
            <Notch />
          </BuildTabs>
          <VizGrid>
            {vizIcons.map((v, i) => <VizCell key={i}>{v}</VizCell>)}
            <VizCell><MoreDots>...</MoreDots></VizCell>
          </VizGrid>
          <FieldLabel>Values</FieldLabel>
          <DropZone $h={28} $pl={8} $mt={6}>Add data fields here</DropZone>
          <DrillTitle>Drill through</DrillTitle>
          <ToggleRow>Cross-report<ToggleBox><ToggleKnob />Off</ToggleBox></ToggleRow>
          <ToggleRow>Keep all filters<ToggleBox $on>On<ToggleKnob $on /></ToggleBox></ToggleRow>
          <DropZone $dark $h={26} $pl={6} $mt={4}>Add drill-through fields here</DropZone>
        </VizPane>

        <DataPane>
          <PaneHead>Data<Chev2 /></PaneHead>
          <DataSearch>
            <svg width="15" height="15" viewBox="0 0 15 15" fill="none" stroke="#ccc"><circle cx="6" cy="6" r="5" /><path d="M9.500 9.500l5 5" /></svg>
            Search
          </DataSearch>
          <FieldList>
            <FieldInner>
              {fields.map(([n, k], i) => (
                <FieldRow key={i}>
                  <Expander>{k === "c" ? <svg width="6" height="9" viewBox="0 0 6 9" fill="none" stroke="#ddd"><path d="M1 .5l4 4-4 4" /></svg> : null}</Expander>
                  <CheckBox />
                  <FieldIcon>{k === "s" ? <Sigma /> : k === "c" ? <CalIcon /> : null}</FieldIcon>
                  {n}
                </FieldRow>
              ))}
            </FieldInner>
          </FieldList>
          <ScrollThumb />
        </DataPane>
      </Middle>

      <StatusBar>
        Page 2 of 10
        <ZoomTools>
          <ZoomSign>-</ZoomSign>
          <ZoomTrack><ZoomThumb /><ZoomMid /></ZoomTrack>
          <ZoomSign>+</ZoomSign>
          <ZoomPct>68%</ZoomPct>
          <FitIcon><svg width="15" height="11" viewBox="0 0 15 11" fill="none" stroke="#ccc" strokeWidth={1.200}><rect x=".6" y=".6" width="13.800" height="9.800" /><path d="M4 3H3v5h1M11 3h1v5h-1" stroke="#ccc" /></svg></FitIcon>
        </ZoomTools>
      </StatusBar>
    </Shell>
  );
}
